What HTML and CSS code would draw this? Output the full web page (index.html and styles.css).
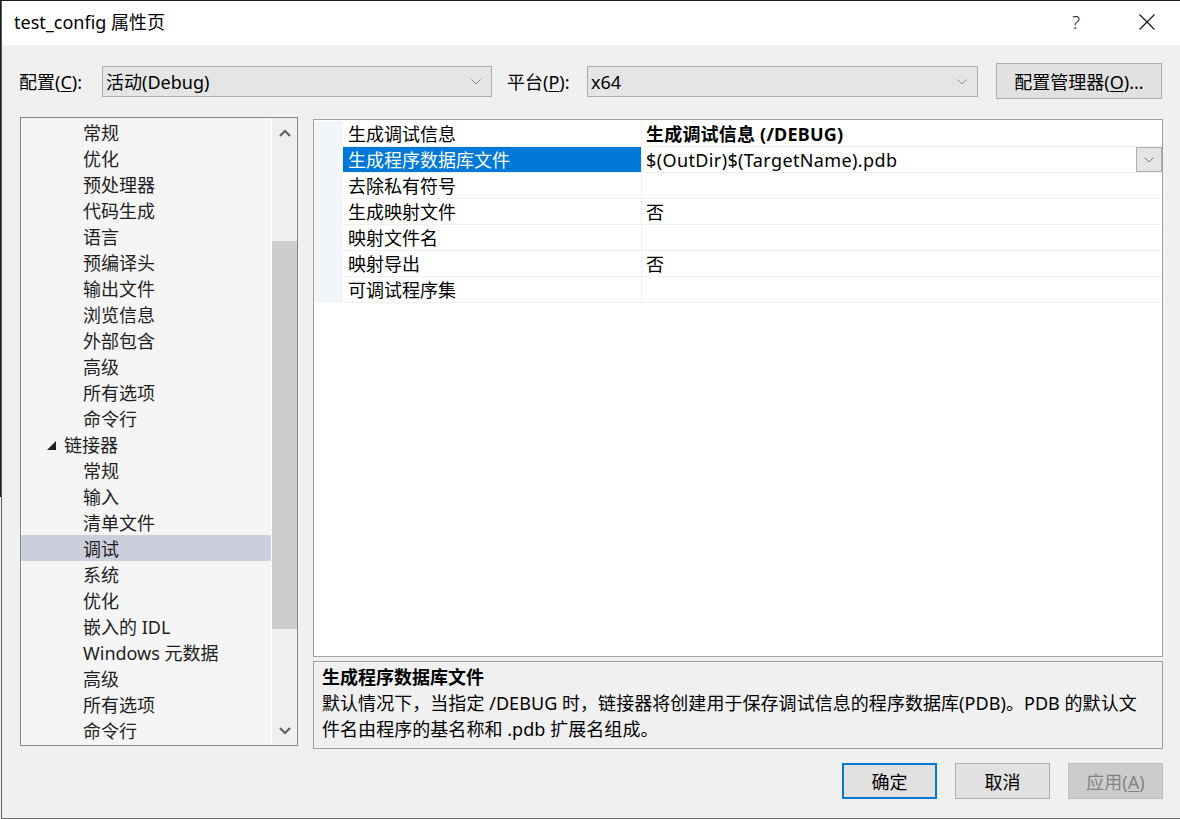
FILE: index.html
```html
<!DOCTYPE html>
<html lang="zh-CN">
<head>
<meta charset="utf-8">
<title>test_config 属性页</title>
<link rel="stylesheet" href="styles.css">
</head>
<body>
<div class="window">
  <div class="titlebar">
    <div class="title">test_config 属性页</div>
    <div class="title-actions">
      <span class="help">?</span>
      <svg class="close" width="16" height="16" viewBox="0 0 16 16"><path d="M0.5 0.5 L15.5 15.5 M15.5 0.5 L0.5 15.5" stroke="#111" stroke-width="1.1" fill="none"/></svg>
    </div>
  </div>
  <div class="content">
    <div class="config-row">
      <label class="lbl lbl-config">配置(<u>C</u>):</label>
      <div class="select select-config">
        <span class="sel-text">活动(Debug)</span>
        <svg class="sel-chev" width="10" height="6" viewBox="0 0 10 6"><polyline points="0.5,0.5 5,5 9.5,0.5" stroke="#8a8a8a" stroke-width="1" fill="none"/></svg>
      </div>
      <label class="lbl lbl-platform">平台(<u>P</u>):</label>
      <div class="select select-platform">
        <span class="sel-text">x64</span>
        <svg class="sel-chev" width="10" height="6" viewBox="0 0 10 6"><polyline points="0.5,0.5 5,5 9.5,0.5" stroke="#8a8a8a" stroke-width="1" fill="none"/></svg>
      </div>
      <button class="btn btn-manager">配置管理器(<u>O</u>)...</button>
    </div>

    <div class="main">
      <div class="tree">
        <div class="tree-list">
          <div class="item l2">常规</div>
          <div class="item l2">优化</div>
          <div class="item l2">预处理器</div>
          <div class="item l2">代码生成</div>
          <div class="item l2">语言</div>
          <div class="item l2">预编译头</div>
          <div class="item l2">输出文件</div>
          <div class="item l2">浏览信息</div>
          <div class="item l2">外部包含</div>
          <div class="item l2">高级</div>
          <div class="item l2">所有选项</div>
          <div class="item l2">命令行</div>
          <div class="item l1"><svg class="expander" width="9" height="9" viewBox="0 0 9 9"><polygon points="9,0 9,9 0,9" fill="#1e1e1e"/></svg>链接器</div>
          <div class="item l2">常规</div>
          <div class="item l2">输入</div>
          <div class="item l2">清单文件</div>
          <div class="item l2 selected">调试</div>
          <div class="item l2">系统</div>
          <div class="item l2">优化</div>
          <div class="item l2">嵌入的 IDL</div>
          <div class="item l2">Windows 元数据</div>
          <div class="item l2">高级</div>
          <div class="item l2">所有选项</div>
          <div class="item l2">命令行</div>
        </div>
        <div class="vscroll">
          <svg class="sb-arrow" width="12" height="8" viewBox="0 0 12 8"><polyline points="1,7 6,2 11,7" stroke="#606060" stroke-width="2.2" fill="none"/></svg>
          <div class="sb-track">
            <div class="sb-thumb"></div>
          </div>
          <svg class="sb-arrow" width="12" height="8" viewBox="0 0 12 8"><polyline points="1,1 6,6 11,1" stroke="#606060" stroke-width="2.2" fill="none"/></svg>
        </div>
      </div>

      <div class="right">
        <div class="grid">
          <div class="row">
            <div class="margin"></div>
            <div class="name">生成调试信息</div>
            <div class="value bold"><span class="latin">生成调试信息 (/DEBUG)</span></div>
          </div>
          <div class="row">
            <div class="margin"></div>
            <div class="name sel">生成程序数据库文件</div>
            <div class="value">
              <span class="latin">$(OutDir)$(TargetName).pdb</span>
              <div class="dd-btn"><svg width="10" height="6" viewBox="0 0 10 6"><polyline points="0.5,0.5 5,5 9.5,0.5" stroke="#777" stroke-width="1" fill="none"/></svg></div>
            </div>
          </div>
          <div class="row">
            <div class="margin"></div>
            <div class="name">去除私有符号</div>
            <div class="value"></div>
          </div>
          <div class="row">
            <div class="margin"></div>
            <div class="name">生成映射文件</div>
            <div class="value">否</div>
          </div>
          <div class="row">
            <div class="margin"></div>
            <div class="name">映射文件名</div>
            <div class="value"></div>
          </div>
          <div class="row">
            <div class="margin"></div>
            <div class="name">映射导出</div>
            <div class="value">否</div>
          </div>
          <div class="row">
            <div class="margin"></div>
            <div class="name">可调试程序集</div>
            <div class="value"></div>
          </div>
        </div>
        <div class="desc">
          <div class="desc-title">生成程序数据库文件</div>
          <div class="desc-text">默认情况下，当指定 /DEBUG 时，链接器将创建用于保存调试信息的程序数据库(PDB)。PDB 的默认文<br>件名由程序的基名称和 .pdb 扩展名组成。</div>
        </div>
      </div>
    </div>

    <div class="buttons">
      <button class="btn btn-dlg btn-default">确定</button>
      <button class="btn btn-dlg">取消</button>
      <button class="btn btn-dlg btn-disabled">应用(<u>A</u>)</button>
    </div>
  </div>
</div>
</body>
</html>
```

FILE: styles.css
```css
* { box-sizing: border-box; }

html, body {
  margin: 0;
  padding: 0;
  width: 1180px;
  height: 819px;
  overflow: hidden;
}

body {
  background: linear-gradient(to bottom, #1c1c1c 0, #1c1c1c 497px, #f4f4f4 497px);
  font-family: "Noto Sans", "Noto Sans CJK SC", sans-serif;
  font-size: 18px;
  color: #000;
}

u { text-decoration: underline; text-underline-offset: 2px; text-decoration-thickness: 1px; }

.window {
  margin: 1px 0 0 1px;
  width: 1179px;
  height: 818px;
  border-left: 1px solid #5e5e5e;
  border-bottom: 1px solid #6f6f6f;
  background: #f0f0f0;
  display: flex;
  flex-direction: column;
}

.titlebar {
  height: 44px;
  background: #ffffff;
  display: flex;
  align-items: center;
  justify-content: space-between;
  padding-left: 12px;
}

.title {
  font-size: 18px;
  line-height: 24px;
  margin-top: -2px;
  color: #000;
}

.title-actions {
  display: flex;
  align-items: center;
  margin-top: -2px;
}

.help {
  font-size: 19px;
  line-height: 24px;
  color: #222;
  font-weight: 300;
  margin-right: 59px;
}

.close {
  margin-right: 25px;
  display: block;
}

.content {
  flex: 1;
  padding: 18px 17px 0 18px;
  display: flex;
  flex-direction: column;
}

/* config row */
.config-row {
  height: 36px;
  display: flex;
  align-items: center;
  margin-left: -1px;
}

.lbl {
  line-height: 24px;
  color: #000;
  white-space: nowrap;
  padding-top: 2px;
}

.lbl-config { width: 83px; }
.lbl-platform { width: 80px; margin-left: 15px; }

.select {
  height: 31px;
  background: #e5e5e5;
  border: 1px solid #acacac;
  display: flex;
  align-items: center;
  justify-content: space-between;
  padding: 0 10px 0 3px;
  line-height: 24px;
}

.sel-text { padding-top: 2px; }

.select-config { width: 390px; }
.select-platform { width: 391px; }

.sel-chev { display: block; margin-top: 1px; }

.btn {
  font-family: "Noto Sans", "Noto Sans CJK SC", sans-serif;
  font-size: 18px;
  line-height: 24px;
  background: #e1e1e1;
  border: 1px solid #adadad;
  color: #000;
  padding: 1px 0 0 0;
  margin: 0;
}

.btn-manager {
  width: 166px;
  height: 36px;
  margin-left: 18px;
}

/* main area */
.main {
  margin-top: 18px;
  display: flex;
  gap: 15px;
  align-items: flex-start;
}

.tree {
  width: 278px;
  height: 629px;
  border: 1px solid #828790;
  background: #f5f5f5;
  display: flex;
}

.tree-list {
  flex: 1;
  padding-top: 1px;
}

.item {
  height: 26px;
  line-height: 26px;
  padding-top: 1px;
  color: #1e1e1e;
  white-space: nowrap;
  display: flex;
  align-items: center;
}

.item.l2 { padding-left: 62px; }
.item.l1 { padding-left: 26px; }

.expander {
  display: block;
  margin-right: 8px;
  margin-top: 1px;
}

.item.selected { background: #cccedb; }

.vscroll {
  width: 26px;
  border-left: 1px solid #ffffff;
  background: #f0f0f0;
  display: flex;
  flex-direction: column;
  align-items: center;
}

.sb-arrow { display: block; flex: none; }
.vscroll .sb-arrow:first-child { margin-top: 11px; }
.vscroll .sb-arrow:last-child { margin-bottom: 10px; }

.sb-track {
  flex: 1;
  width: 100%;
  padding-top: 104px;
  padding-bottom: 98px;
  display: flex;
}

.sb-thumb {
  flex: 1;
  background: #cdcdcd;
}

/* right column */
.right {
  width: 850px;
  display: flex;
  flex-direction: column;
}

.grid {
  margin-top: 2px;
  height: 538px;
  border: 1px solid #a0a0a0;
  background: #ffffff;
  padding-top: 1px;
}

.row {
  height: 26px;
  display: flex;
  border-bottom: 1px solid #f0f0f0;
}

.margin {
  width: 29px;
  background: #f2f5fa;
  height: 26px;
  margin-bottom: -1px;
}

.name {
  width: 299px;
  padding-left: 5px;
  padding-top: 1px;
  line-height: 25px;
  border-right: 1px solid #f0f0f0;
  white-space: nowrap;
  color: #000;
}

.name.sel {
  background: #0078d7;
  color: #ffffff;
}

.value {
  flex: 1;
  padding-left: 4px;
  line-height: 25px;
  display: flex;
  justify-content: space-between;
  white-space: nowrap;
}

.value > span, .value:not(:has(span)) { padding-top: 1px; }

.latin { letter-spacing: 0.38px; }
.value.bold .latin { letter-spacing: 0.2px; }

.value.bold { font-weight: 700; }

.dd-btn {
  width: 26px;
  height: 25px;
  background: #e5e5e5;
  border: 1px solid #adadad;
  display: flex;
  align-items: center;
  justify-content: center;
}

.desc {
  margin-top: 4px;
  height: 88px;
  border: 1px solid #a0a0a0;
  background: #f0f0f0;
  padding: 2px 0 0 8px;
}

.desc-title {
  font-weight: 700;
  line-height: 26px;
}

.desc-text {
  line-height: 26px;
  white-space: nowrap;
  letter-spacing: 0.05px;
}

/* dialog buttons */
.buttons {
  margin-top: 14px;
  display: flex;
  justify-content: flex-end;
  gap: 18px;
}

.btn-dlg {
  width: 95px;
  height: 36px;
}

.btn-default {
  border: 2px solid #0078d7;
}

.btn-disabled {
  background: #cccccc;
  border-color: #bfbfbf;
  color: #838383;
}
```
